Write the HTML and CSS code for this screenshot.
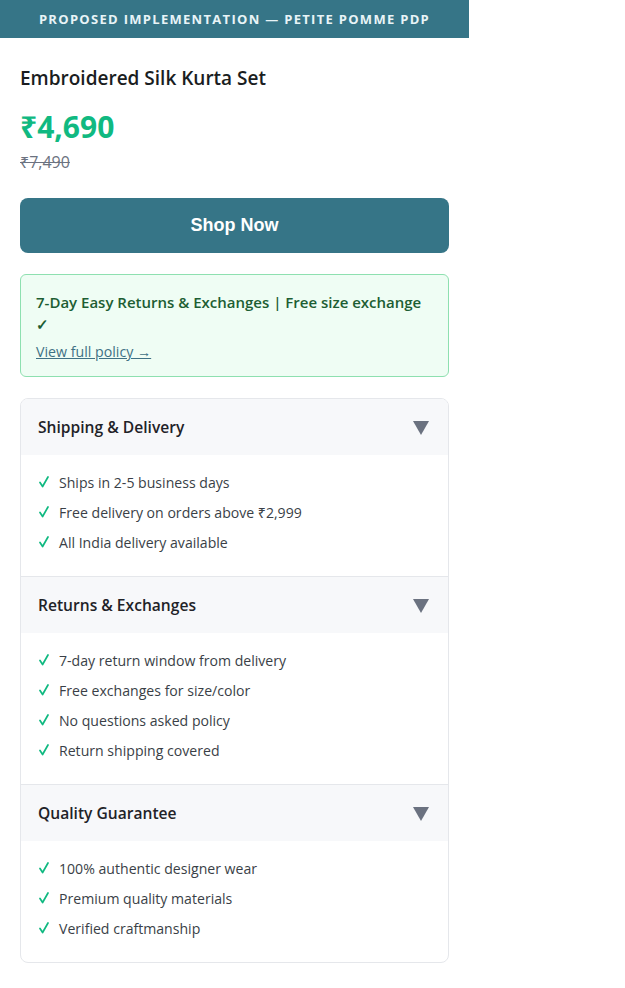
FILE: index.html
```html
<!DOCTYPE html>
<html lang="en">
<head>
    <meta charset="UTF-8">
    <meta name="viewport" content="width=device-width, initial-scale=1.0">
    <title>Petite Pomme PDP</title>
    <link rel="stylesheet" href="styles.css">
</head>
<body>
    <div class="page">
        <div class="banner">PROPOSED IMPLEMENTATION — PETITE POMME PDP</div>
        <div class="product">
            <h1 class="title">Embroidered Silk Kurta Set</h1>
            <div class="price">₹4,690</div>
            <div class="old-price">₹7,490</div>
            <button class="shop-btn">Shop Now</button>

            <div class="policy">
                <p class="policy-text">7-Day Easy Returns &amp; Exchanges | Free size exchange ✓</p>
                <a href="#" class="policy-link">View full policy →</a>
            </div>

            <div class="accordion">
                <div class="acc-item">
                    <div class="acc-head">
                        <span>Shipping &amp; Delivery</span>
                        <svg class="arrow" width="16" height="14" viewBox="0 0 16 14"><polygon points="0,0 16,0 8,14"/></svg>
                    </div>
                    <ul class="acc-body">
                        <li><svg class="tick" width="10" height="12" viewBox="0 0 10 12"><path d="M1 6.5 L3.6 10.5 L9 1"/></svg>Ships in 2-5 business days</li>
                        <li><svg class="tick" width="10" height="12" viewBox="0 0 10 12"><path d="M1 6.5 L3.6 10.5 L9 1"/></svg>Free delivery on orders above ₹2,999</li>
                        <li><svg class="tick" width="10" height="12" viewBox="0 0 10 12"><path d="M1 6.5 L3.6 10.5 L9 1"/></svg>All India delivery available</li>
                    </ul>
                </div>
                <div class="acc-item">
                    <div class="acc-head">
                        <span>Returns &amp; Exchanges</span>
                        <svg class="arrow" width="16" height="14" viewBox="0 0 16 14"><polygon points="0,0 16,0 8,14"/></svg>
                    </div>
                    <ul class="acc-body">
                        <li><svg class="tick" width="10" height="12" viewBox="0 0 10 12"><path d="M1 6.5 L3.6 10.5 L9 1"/></svg>7-day return window from delivery</li>
                        <li><svg class="tick" width="10" height="12" viewBox="0 0 10 12"><path d="M1 6.5 L3.6 10.5 L9 1"/></svg>Free exchanges for size/color</li>
                        <li><svg class="tick" width="10" height="12" viewBox="0 0 10 12"><path d="M1 6.5 L3.6 10.5 L9 1"/></svg>No questions asked policy</li>
                        <li><svg class="tick" width="10" height="12" viewBox="0 0 10 12"><path d="M1 6.5 L3.6 10.5 L9 1"/></svg>Return shipping covered</li>
                    </ul>
                </div>
                <div class="acc-item">
                    <div class="acc-head">
                        <span>Quality Guarantee</span>
                        <svg class="arrow" width="16" height="14" viewBox="0 0 16 14"><polygon points="0,0 16,0 8,14"/></svg>
                    </div>
                    <ul class="acc-body">
                        <li><svg class="tick" width="10" height="12" viewBox="0 0 10 12"><path d="M1 6.5 L3.6 10.5 L9 1"/></svg>100% authentic designer wear</li>
                        <li><svg class="tick" width="10" height="12" viewBox="0 0 10 12"><path d="M1 6.5 L3.6 10.5 L9 1"/></svg>Premium quality materials</li>
                        <li><svg class="tick" width="10" height="12" viewBox="0 0 10 12"><path d="M1 6.5 L3.6 10.5 L9 1"/></svg>Verified craftmanship</li>
                    </ul>
                </div>
            </div>
        </div>
    </div>
</body>
</html>
```

FILE: styles.css
```css
*{
    margin: 0;
    padding: 0;
    box-sizing: border-box;
}
body{
    background: white;
    font-family: "Open Sans", "Noto Sans", sans-serif;
    color: #1f2328;
}
.page{
    width: 469px;
}
.banner{
    height: 38px;
    background: #367587;
    color: #e8f4f7;
    font-size: 13px;
    font-weight: 700;
    letter-spacing: 1.3px;
    display: flex;
    align-items: center;
    justify-content: center;
}
.product{
    padding: 27px 20px 20px 20px;
}
.title{
    font-size: 19px;
    font-weight: 600;
    line-height: 26px;
    color: #1a1d21;
}
.price{
    margin-top: 16px;
    font-size: 30px;
    font-weight: 700;
    line-height: 40px;
    color: #10b981;
}
.old-price{
    margin-top: 3px;
    font-size: 16px;
    line-height: 24px;
    color: #6b7280;
    text-decoration: line-through;
}
.shop-btn{
    display: block;
    width: 100%;
    height: 55px;
    margin-top: 24px;
    border: none;
    border-radius: 8px;
    background: #367587;
    color: white;
    font-family: "Liberation Sans", Arial, sans-serif;
    font-size: 18px;
    font-weight: 700;
}
.policy{
    margin-top: 21px;
    padding: 16px 18px 14px 15px;
    background: #effdf4;
    border: 1px solid #8ee0b0;
    border-radius: 6px;
}
.policy-text{
    font-size: 15px;
    font-weight: 600;
    line-height: 22px;
    color: #1d5e33;
}
.policy-link{
    display: inline-block;
    margin-top: 7px;
    font-size: 14.2px;
    line-height: 20px;
    color: #3f7185;
}
.accordion{
    margin-top: 21px;
    border: 1px solid #e5e7eb;
    border-radius: 8px;
    overflow: hidden;
}
.acc-item + .acc-item{
    border-top: 1px solid #e5e7eb;
}
.acc-head{
    height: 56px;
    padding: 0 19px 0 17px;
    background: #f7f8fa;
    display: flex;
    align-items: center;
    justify-content: space-between;
    font-size: 15.6px;
    font-weight: 600;
    color: #1f2328;
}
.arrow{
    fill: #6b7280;
    margin-top: 2px;
}
.acc-body{
    list-style: none;
    padding: 12px 18px 19px 17px;
}
.acc-body li{
    height: 30px;
    display: flex;
    align-items: center;
    font-size: 14.1px;
    color: #3a3f47;
}
.tick{
    margin: 0 10px 0 1px;
    fill: none;
    stroke: #10b981;
    stroke-width: 1.7;
    stroke-linecap: round;
    stroke-linejoin: round;
}
```
